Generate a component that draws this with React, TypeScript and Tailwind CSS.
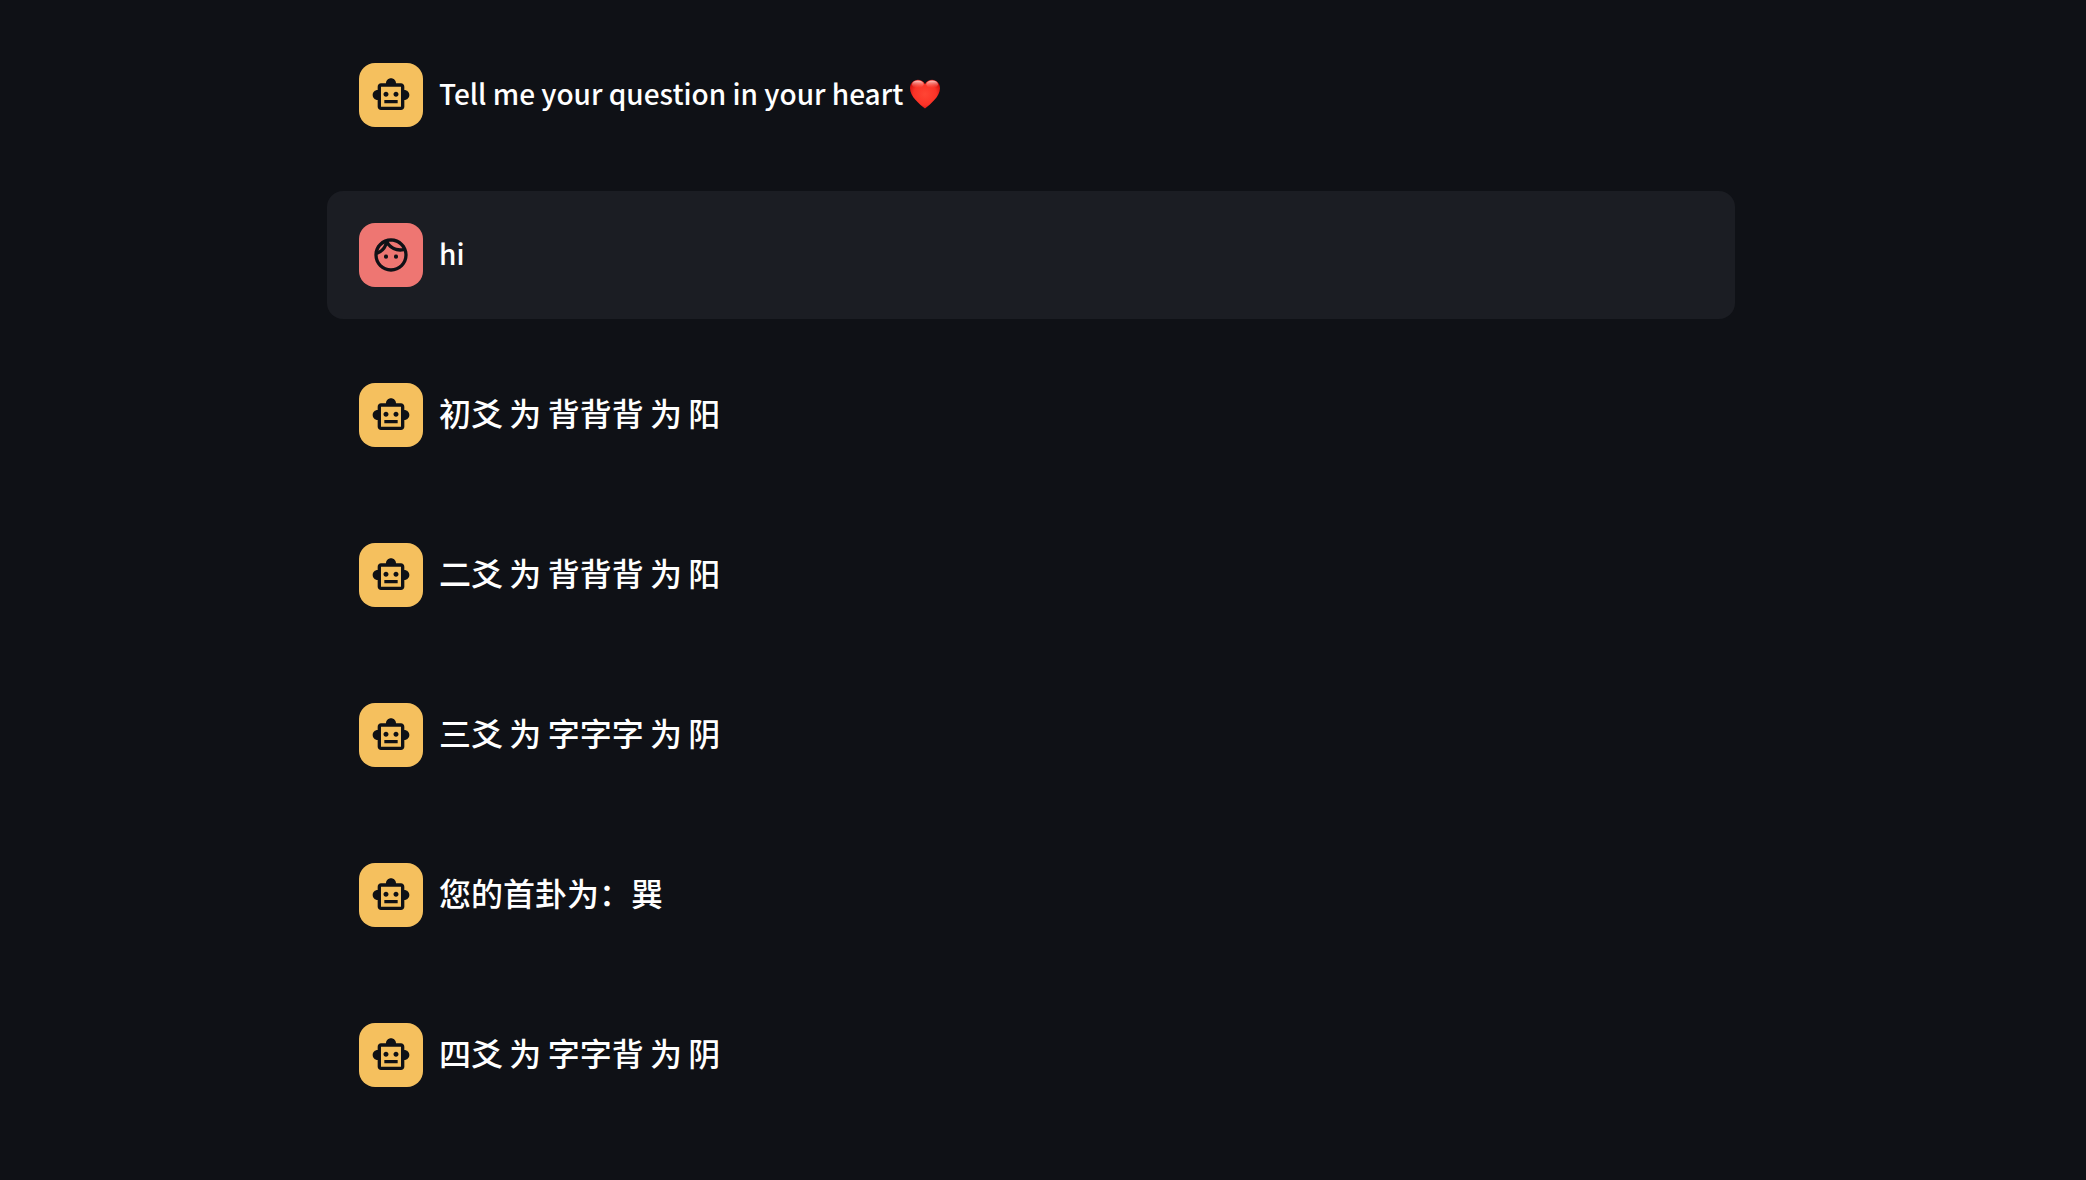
import { MdOutlineFace, MdOutlineSmartToy } from "react-icons/md";

type Message = { role: "assistant" | "user"; text: string; heart?: boolean };

const messages: Message[] = [
  { role: "assistant", text: "Tell me your question in your heart", heart: true },
  { role: "user", text: "hi" },
  { role: "assistant", text: "初爻 为 背背背 为 阳" },
  { role: "assistant", text: "二爻 为 背背背 为 阳" },
  { role: "assistant", text: "三爻 为 字字字 为 阴" },
  { role: "assistant", text: "您的首卦为：巽" },
  { role: "assistant", text: "四爻 为 字字背 为 阴" },
];

function Heart() {
  return (
    <svg role="img" aria-label="red heart" viewBox="0 0 32 32" className="ml-1.5 inline-block size-8 align-[-5px]">
      <defs>
        <radialGradient id="heart-body" cx="0.5" cy="0.5" r="0.58">
          <stop offset="0" stopColor="#ff4534" />
          <stop offset="0.65" stopColor="#fb3327" />
          <stop offset="1" stopColor="#cf0d0b" />
        </radialGradient>
        <linearGradient id="heart-shine" x1="0" y1="0" x2="0" y2="1">
          <stop offset="0" stopColor="#ffd9d3" stopOpacity="0.95" />
          <stop offset="1" stopColor="#ff6a5c" stopOpacity="0" />
        </linearGradient>
      </defs>
      <path
        d="M16 6.2C14.6 3.400 11.900 1.700 8.900 1.700C4.500 1.700 1 5.300 1 10.200C1 18.500 10.500 26 16 30.500C21.500 26 31 18.500 31 10.200C31 5.300 27.500 1.700 23.100 1.700C20.100 1.700 17.400 3.400 16 6.200Z"
        fill="url(#heart-body)"
      />
      <ellipse cx="8.800" cy="6.300" rx="5.800" ry="3.800" fill="url(#heart-shine)" />
      <ellipse cx="23.200" cy="6.300" rx="5.800" ry="3.800" fill="url(#heart-shine)" />
    </svg>
  );
}

/* Han characters are set a little larger than the Latin text and spaces around them. */
function MessageText({ text }: { text: string }) {
  return text.split(/([^\x00-\x7f]+)/).map((run, i) =>
    /[^\x00-\x7f]/.test(run) ? (
      <span key={i} className="text-[32px]">
        {run}
      </span>
    ) : (
      run
    ),
  );
}

function ChatMessage({ message }: { message: Message }) {
  const isUser = message.role === "user";
  const Icon = isUser ? MdOutlineFace : MdOutlineSmartToy;
  return (
    <li className={`flex items-center gap-4 rounded-2xl p-8 ${isUser ? "bg-[#1b1d23]" : ""}`}>
      <div
        className={`flex size-16 shrink-0 items-center justify-center rounded-2xl text-[#0f1116] ${
          isUser ? "bg-[#ee7672]" : "bg-[#f5c05e]"
        }`}
      >
        <Icon className="size-10" aria-hidden="true" />
      </div>
      <p className="min-w-0 flex-1 pb-1 text-[28px] leading-12 font-medium">
        <MessageText text={message.text} />
        {message.heart && <Heart />}
      </p>
    </li>
  );
}

export default function App() {
  return (
    <main
      lang="zh-CN"
      className="min-h-screen bg-[#0f1116] pt-[31px] pr-6 pb-14 font-['Noto_Sans_CJK_SC',sans-serif] text-white"
    >
      <ul className="mx-auto flex max-w-[1408px] flex-col gap-8">
        {messages.map((message, i) => (
          <ChatMessage key={i} message={message} />
        ))}
      </ul>
    </main>
  );
}
